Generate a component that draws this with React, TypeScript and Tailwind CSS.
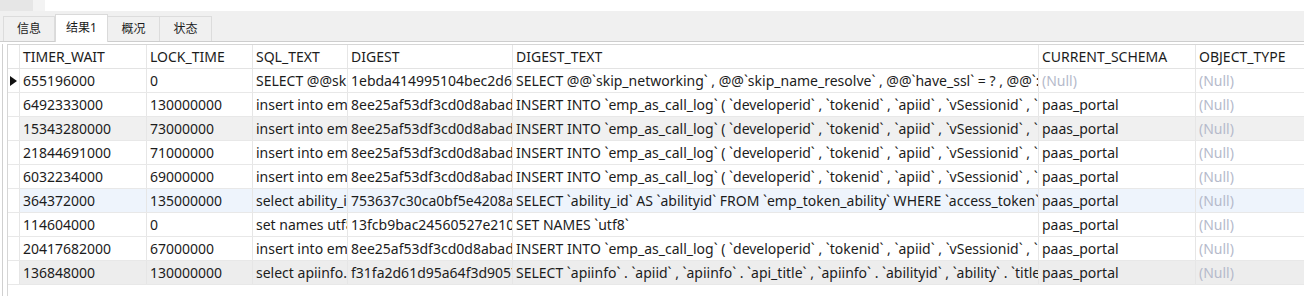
import React from "react";

const cols = [
  { name: "TIMER_WAIT", w: "w-[127px]" },
  { name: "LOCK_TIME", w: "w-[106px]" },
  { name: "SQL_TEXT", w: "w-[95px]" },
  { name: "DIGEST", w: "w-[165px]" },
  { name: "DIGEST_TEXT", w: "w-[526px]" },
  { name: "CURRENT_SCHEMA", w: "w-[157px]" },
  { name: "OBJECT_TYPE", w: "w-[140px]" },
];

// cell texts are cut where the grid cuts them
const insertText = "INSERT INTO `emp_as_call_log` ( `developerid` , `tokenid` , `apiid` , `vSessionid` , `";
const insertSql = "insert into emp";
const insertDigest = "8ee25af53df3cd0d8abad";

const rows: { cells: (string | null)[]; bg: string }[] = [
  {
    cells: [
      "655196000",
      "0",
      "SELECT @@sk",
      "1ebda414995104bec2d67",
      "SELECT @@`skip_networking` , @@`skip_name_resolve` , @@`have_ssl` = ? , @@`:",
      null,
      null,
    ],
    bg: "bg-white",
  },
  { cells: ["6492333000", "130000000", insertSql, insertDigest, insertText, "paas_portal", null], bg: "bg-white" },
  { cells: ["15343280000", "73000000", insertSql, insertDigest, insertText, "paas_portal", null], bg: "bg-[#f0f0f0]" },
  { cells: ["21844691000", "71000000", insertSql, insertDigest, insertText, "paas_portal", null], bg: "bg-white" },
  { cells: ["6032234000", "69000000", insertSql, insertDigest, insertText, "paas_portal", null], bg: "bg-white" },
  {
    cells: [
      "364372000",
      "135000000",
      "select ability_ic",
      "753637c30ca0bf5e4208ac",
      "SELECT `ability_id` AS `abilityid` FROM `emp_token_ability` WHERE `access_token` :",
      "paas_portal",
      null,
    ],
    bg: "bg-[#eef4fc]",
  },
  {
    cells: ["114604000", "0", "set names utf8", "13fcb9bac24560527e210", "SET NAMES `utf8`", "paas_portal", null],
    bg: "bg-white",
  },
  { cells: ["20417682000", "67000000", insertSql, insertDigest, insertText, "paas_portal", null], bg: "bg-white" },
  {
    cells: [
      "136848000",
      "130000000",
      "select apiinfo.a",
      "f31fa2d61d95a64f3d9057",
      "SELECT `apiinfo` . `apiid` , `apiinfo` . `api_title` , `apiinfo` . `abilityid` , `ability` . `title",
      "paas_portal",
      null,
    ],
    bg: "bg-[#ededed]",
  },
];

const tabs = ["信息", "结果1", "概况", "状态"];

const App: React.FC = () => {
  return (
    <div
      className="w-[1304px] h-[296px] overflow-hidden bg-white text-[#1c1c1c]"
      style={{ fontFamily: '"Noto Sans", "Noto Sans CJK SC", sans-serif' }}
    >
      {/* top strip */}
      <div className="flex h-[11px]">
        <div className="w-[33px] bg-[#e6e6e6]" />
        <div className="w-[12px] bg-[#f3f3f3]" />
      </div>

      {/* tabs */}
      <div className="flex h-[31px] items-end bg-[#f0f0f0] border-b border-[#cdcdcd] pl-[3px]">
        {tabs.map((t, i) =>
          i === 1 ? (
            <div
              key={t}
              className="flex h-[28px] w-[53px] items-center justify-center bg-white border-x border-t border-[#dadada] -mb-px text-[12px] pb-[2px]"
            >
              {t}
            </div>
          ) : (
            <div
              key={t}
              className="flex h-[25px] w-[52px] items-center justify-center border-r border-t border-[#dcdcdc] text-[12px] first:border-l"
            >
              {t}
            </div>
          )
        )}
      </div>

      {/* grid */}
      <div className="mt-[2px] ml-[2px] h-[300px] border-l border-[#d0d0d0] pl-[4px]">
        <div className="border-l border-t border-[#d6d6d6] h-full">
          <div className="flex h-[24px] border-b border-[#e3e3e3] text-[14px]">
            <div className="w-[12px] shrink-0 border-r border-[#e6e6e6]" />
            {cols.map((c) => (
              <div
                key={c.name}
                className={`${c.w} shrink-0 border-r border-[#e6e6e6] px-[3px] flex items-center whitespace-nowrap overflow-hidden`}
              >
                {c.name}
              </div>
            ))}
          </div>
          {rows.map((r, ri) => (
            <div key={ri} className={`flex h-[24px] border-b border-[#e8e8e8] text-[14px] ${r.bg}`}>
              <div className="w-[12px] shrink-0 border-r border-[#e6e6e6] bg-white flex items-center justify-center">
                {ri === 0 && (
                  <svg width="7" height="10" viewBox="0 0 7 10">
                    <path d="M0 0 L7 5 L0 10 Z" fill="#111" />
                  </svg>
                )}
              </div>
              {r.cells.map((c, ci) => (
                <div
                  key={ci}
                  className={`${cols[ci].w} shrink-0 border-r border-[#e6e6e6] px-[3px] flex items-center whitespace-nowrap overflow-hidden ${
                    c === null ? "text-[#b5bacb]" : ""
                  }`}
                >
                  {c === null ? "(Null)" : c}
                </div>
              ))}
            </div>
          ))}
        </div>
      </div>
    </div>
  );
};

export default App;
